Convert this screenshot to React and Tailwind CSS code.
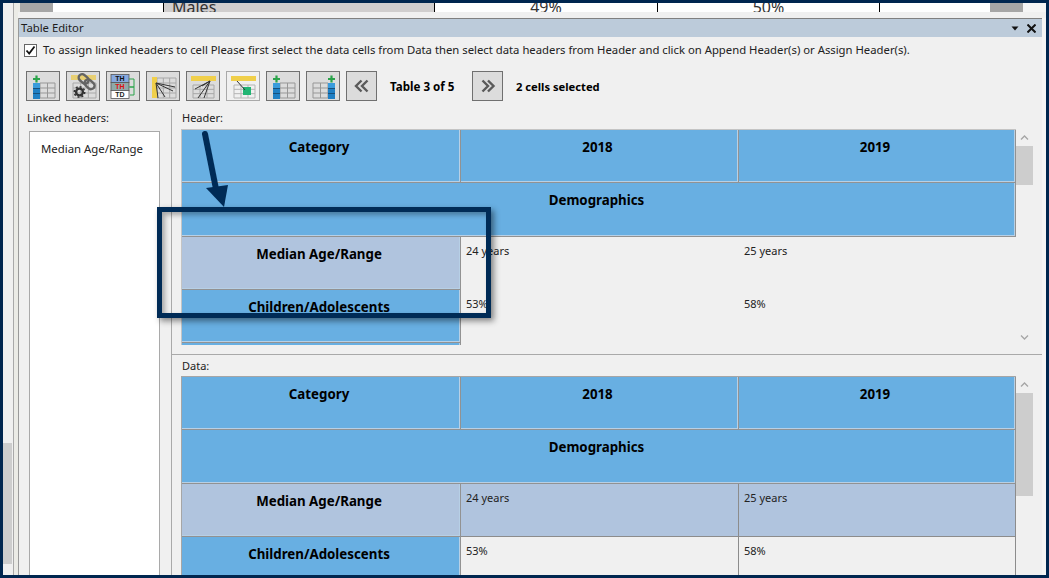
import React from "react";

function Button({ children, light, wide }) {
  return (
    <div
      className={`flex items-center justify-center h-[30px] border ${wide ? "w-[31px]" : "w-[34px]"} ${
        light ? "bg-[#f0f0f0] border-[#a9a9a9]" : "bg-[#dcdcdc] border-[#707070]"
      }`}
    >
      {children}
    </div>
  );
}

function GridLines({ x, y, w, h, cols, rows, color = "#979797" }) {
  const lines = [];
  for (let i = 0; i <= cols; i++) {
    const px = x + (w * i) / cols;
    lines.push(<line key={"c" + i} x1={px} y1={y} x2={px} y2={y + h} stroke={color} strokeWidth="1" />);
  }
  for (let i = 0; i <= rows; i++) {
    const py = y + (h * i) / rows;
    lines.push(<line key={"r" + i} x1={x} y1={py} x2={x + w} y2={py} stroke={color} strokeWidth="1" />);
  }
  return <g>{lines}</g>;
}

function BlueColumn({ x }) {
  return (
    <g>
      <rect x={x} y="11" width="7" height="16" fill="#1f7fc4" />
      <rect x={x} y="11" width="7" height="5" fill="#3a9bdc" />
      <line x1={x} y1="16.5" x2={x + 7} y2="16.5" stroke="#17507c" />
      <line x1={x} y1="21.5" x2={x + 7} y2="21.5" stroke="#17507c" />
      <path d={`M${x + 3.5} 3.5v7M${x} 7h7`} stroke="#2aa34a" strokeWidth="2.2" fill="none" />
    </g>
  );
}

function AddLeftIcon() {
  return (
    <svg width="30" height="28" viewBox="0 0 30 28">
      <GridLines x={12} y={11} w={15} h={15} cols={2} rows={3} />
      <BlueColumn x={5} />
    </svg>
  );
}

function AddRightIcon() {
  return (
    <svg width="30" height="28" viewBox="0 0 30 28">
      <GridLines x={5} y={11} w={15} h={15} cols={2} rows={3} />
      <BlueColumn x={20} />
    </svg>
  );
}

function LinkIcon() {
  return (
    <svg width="30" height="28" viewBox="0 0 30 28">
      <rect x="3" y="3" width="25" height="5" fill="#e8cf72" />
      <GridLines x={5} y={11} w={23} h={15} cols={3} rows={3} color="#a8a8a8" />
      <g fill="none" stroke="#646464" strokeWidth="2.4" transform="rotate(42 19 10)">
        <rect x="9" y="6.5" width="11" height="7" rx="3.5" />
        <rect x="17" y="6.5" width="11" height="7" rx="3.5" />
      </g>
      <circle cx="11.5" cy="20" r="3.4" fill="none" stroke="#333" strokeWidth="2.4" />
      <circle cx="11.5" cy="20" r="5.2" fill="none" stroke="#333" strokeWidth="1.6" strokeDasharray="2 2" />
    </svg>
  );
}

function ThIcon() {
  return (
    <svg width="30" height="28" viewBox="0 0 30 28">
      <rect x="3" y="2.5" width="18" height="8" fill="#86a9e0" stroke="#555" strokeWidth="0.8" />
      <rect x="3" y="10.5" width="18" height="8" fill="#8fa9a9" stroke="#555" strokeWidth="0.8" />
      <rect x="3" y="18.5" width="18" height="8" fill="#fff" stroke="#555" strokeWidth="0.8" />
      <text x="12" y="9.3" textAnchor="middle" fontSize="7" fontWeight="700" fontFamily="Liberation Sans, sans-serif" fill="#111">TH</text>
      <text x="12" y="17.3" textAnchor="middle" fontSize="7" fontWeight="700" fontFamily="Liberation Sans, sans-serif" fill="#e01010">TH</text>
      <text x="12" y="25.3" textAnchor="middle" fontSize="7" fontWeight="700" fontFamily="Liberation Sans, sans-serif" fill="#222">TD</text>
      <path d="M21 7h5v8h-4" fill="none" stroke="#2aa34a" strokeWidth="1" />
      <path d="M21 15h5v8h-4" fill="none" stroke="#2aa34a" strokeWidth="1" />
    </svg>
  );
}

function RowHeaderIcon() {
  return (
    <svg width="30" height="28" viewBox="0 0 30 28">
      <GridLines x={9} y={6} w={19} h={20} cols={3} rows={4} color="#a8a8a8" />
      <rect x="4" y="5" width="5" height="21" fill="#f0cf4a" />
      <path d="M8 11L27 15M8 11L25 19M8 11L17 25M8 11L10 26" stroke="#333" strokeWidth="1" fill="none" />
    </svg>
  );
}

function ColHeaderIcon() {
  return (
    <svg width="30" height="28" viewBox="0 0 30 28">
      <GridLines x={5} y={13} w={21} h={13} cols={3} rows={3} color="#a8a8a8" />
      <rect x="3" y="4" width="25" height="5" fill="#f0cf4a" />
      <path d="M22 9L7 17M22 9L10 26M22 9L16 26M22 9L14 14" stroke="#333" strokeWidth="1" fill="none" />
    </svg>
  );
}

function AssignIcon() {
  return (
    <svg width="30" height="28" viewBox="0 0 30 28">
      <GridLines x={6} y={13} w={21} h={13} cols={3} rows={3} color="#b5b5b5" />
      <rect x="3" y="4" width="25" height="5" fill="#f0cf4a" />
      <rect x="15" y="15" width="8" height="8" fill="#22b573" />
      <path d="M9 9L17 18" stroke="#333" strokeWidth="1" />
    </svg>
  );
}

function Chevrons({ right }) {
  return (
    <svg width="16" height="16" viewBox="0 0 16 16" fill="none" stroke="#5a5a5a" strokeWidth="2.4">
      {right ? (
        <path d="M2.5 2.5L8 8L2.5 13.5M8 2.5L13.5 8L8 13.5" />
      ) : (
        <path d="M7.5 2.5L2 8L7.5 13.5M13.5 2.5L8 8L13.5 13.5" />
      )}
    </svg>
  );
}

function HeadCell({ children, selected, span }) {
  return (
    <div
      className={`h-full flex justify-center pt-[7px] pr-[4px] border-r border-b border-[#929292] shadow-[inset_-1px_-1px_0_#b7d0e6] text-[13.3px] font-bold text-black leading-[20px] ${
        selected ? "bg-[#b0c4de]" : "bg-[#68afe2]"
      } ${span ? "col-span-3" : ""}`}
    >
      {children}
    </div>
  );
}

function DataCell({ children, bordered }) {
  return (
    <div
      className={`h-full pl-[5px] pt-[5px] text-[11px] leading-[18px] text-[#222] ${
        bordered ? "border-r border-b border-[#8c8c8c]" : ""
      } ${bordered === "sel" ? "bg-[#b0c4de]" : ""}`}
    >
      {children}
    </div>
  );
}

function ScrollBar({ thumbTop, thumbHeight, down }) {
  return (
    <div className="relative w-[17px] h-full shrink-0">
      <svg className="absolute left-[4px] top-[5px]" width="9" height="7" viewBox="0 0 9 7" fill="none" stroke="#a6a6a6" strokeWidth="1.3">
        <path d="M1 5.5L4.5 2L8 5.5" />
      </svg>
      <div className="absolute left-0 w-[17px] bg-[#cdcdcd]" style={{ top: thumbTop, height: thumbHeight }} />
      {down && (
        <svg className="absolute left-[4px] top-[205px]" width="9" height="7" viewBox="0 0 9 7" fill="none" stroke="#a6a6a6" strokeWidth="1.3">
          <path d="M1 1.5L4.5 5L8 1.5" />
        </svg>
      )}
    </div>
  );
}

function HeaderPane() {
  return (
    <div className="flex h-[216px] overflow-hidden shrink-0">
      <div className="grid grid-cols-[279px_278px_277px] auto-rows-[53.3px] w-[835px] shrink-0 border-t border-l border-[#c4c4c4]">
        <HeadCell>Category</HeadCell>
        <HeadCell>2018</HeadCell>
        <HeadCell>2019</HeadCell>
        <HeadCell span>Demographics</HeadCell>
        <HeadCell selected>Median Age/Range</HeadCell>
        <DataCell>24 years</DataCell>
        <DataCell>25 years</DataCell>
        <HeadCell>Children/Adolescents</HeadCell>
        <DataCell>53%</DataCell>
        <DataCell>58%</DataCell>
        <HeadCell> </HeadCell>
      </div>
      <ScrollBar thumbTop={17} thumbHeight={39} down />
    </div>
  );
}

function DataPane() {
  return (
    <div className="flex flex-1 overflow-hidden">
      <div className="grid grid-cols-[279px_278px_277px] auto-rows-[53.3px] w-[835px] shrink-0 border-t border-l border-[#a6a6a6]">
        <HeadCell>Category</HeadCell>
        <HeadCell>2018</HeadCell>
        <HeadCell>2019</HeadCell>
        <HeadCell span>Demographics</HeadCell>
        <HeadCell selected>Median Age/Range</HeadCell>
        <DataCell bordered="sel">24 years</DataCell>
        <DataCell bordered="sel">25 years</DataCell>
        <HeadCell>Children/Adolescents</HeadCell>
        <DataCell bordered>53%</DataCell>
        <DataCell bordered>58%</DataCell>
      </div>
      <ScrollBar thumbTop={17} thumbHeight={103} />
    </div>
  );
}

export default function App() {
  return (
    <div
      className="relative w-[1049px] h-[578px] border-[3px] border-[#00264f] bg-[#f0f0f0] overflow-hidden flex text-black"
      style={{ fontFamily: '"Noto Sans", "Open Sans", sans-serif' }}
    >
      {/* page scrollbar behind the editor */}
      <div className="relative w-[11px] shrink-0 border-r border-[#a9a9a9]">
        <div className="absolute left-0 top-[440px] w-[9px] h-[121px] bg-[#cdcdcd]" />
      </div>
      <div className="w-[4px] shrink-0 bg-[#ebebe6]" />

      <div className="flex-1 flex flex-col min-w-0 bg-[#f5f5f5]">
        {/* table behind the editor, only its last row shows */}
        <div className="h-[9px] flex overflow-hidden shrink-0 text-[#333]">
          <div className="w-[2px] bg-[#ebebe6]" />
          <div className="w-[33px] bg-[#a6a6a6]" />
          <div className="w-[111px] bg-white border-r border-black" />
          <div className="w-[271px] bg-[#d0cece] border-r border-black pl-[8px] text-[16px] leading-[9px]">
            <div>Males</div>
          </div>
          <div className="w-[223px] bg-white border-r border-black text-center text-[16px]">
            <div className="-mt-[8px]">49%</div>
          </div>
          <div className="w-[222px] bg-white border-r border-black text-center text-[16px]">
            <div className="-mt-[8px]">50%</div>
          </div>
          <div className="w-[110px] bg-white" />
          <div className="w-[33px] bg-[#a6a6a6]" />
          <div className="flex-1" />
        </div>
        <div className="h-[6px] bg-[#f0f0f0] shrink-0" />

        <div className="flex-1 flex flex-col mr-[4px] min-h-0 bg-[#f0f0f0] border-l border-[#9a9a9a]">
          {/* title bar */}
          <div className="h-[19px] shrink-0 flex items-center justify-between pl-[2px] pr-[6px] pt-[1px] bg-[#bccbda] border-t border-[#808080] text-[11.3px] text-[#1c1c1c]">
            <span>Table Editor</span>
            <div className="flex items-center gap-[8px]">
              <svg width="8" height="5" viewBox="0 0 8 5"><path d="M0.5 0.5h7L4 4.5z" fill="#111" /></svg>
              <svg width="9" height="9" viewBox="0 0 9 9" stroke="#111" strokeWidth="2"><path d="M0.5 0.5L8.5 8.5M8.5 0.5L0.5 8.5" /></svg>
            </div>
          </div>

          {/* notice */}
          <div className="flex items-center gap-[6px] h-[14px] mt-[6px] ml-[5px] shrink-0 text-[11.3px] text-[#222] whitespace-nowrap">
            <div className="w-[13px] h-[13px] bg-white border border-[#666] flex items-center justify-center">
              <svg width="11" height="11" viewBox="0 0 11 11" fill="none" stroke="#111" strokeWidth="1.8"><path d="M1.5 5.5L4.2 8.5L9.5 1.5" /></svg>
            </div>
            <span className="pt-[1px]">To assign linked headers to cell Please first select the data cells from Data then select data headers from Header and click on Append Header(s) or Assign Header(s).</span>
          </div>

          {/* toolbar */}
          <div className="flex items-center gap-[6px] mt-[14px] ml-[7px] shrink-0 text-[11.2px] font-bold whitespace-nowrap">
            <Button><AddLeftIcon /></Button>
            <Button><LinkIcon /></Button>
            <Button><ThIcon /></Button>
            <Button><RowHeaderIcon /></Button>
            <Button><ColHeaderIcon /></Button>
            <Button light><AssignIcon /></Button>
            <Button><AddLeftIcon /></Button>
            <Button><AddRightIcon /></Button>
            <Button wide><Chevrons /></Button>
            <span className="ml-[7px] w-[76px] pt-[2px] text-[11.6px]">Table 3 of 5</span>
            <Button wide><Chevrons right /></Button>
            <span className="ml-[7px] pt-[2px]">2 cells selected</span>
          </div>

          <div className="flex flex-1 min-h-0 mt-[8px]">
            {/* linked headers */}
            <div className="w-[153px] shrink-0 flex flex-col pl-[10px] border-r border-[#a9a9a9]">
              <div className="h-[22px] pt-[1px] text-[11px] leading-[16px] text-[#222] -ml-[2px]">Linked headers:</div>
              <div className="flex-1 w-[131px] bg-white border border-b-0 border-[#a9a9a9] pl-[11px] pt-[8px] text-[11.4px] text-[#222]">
                Median Age/Range
              </div>
            </div>

            <div className="flex-1 flex flex-col min-w-0 pl-[9px]">
              <div className="h-[20px] pt-[1px] pl-[1px] text-[11px] leading-[16px] text-[#222] shrink-0">Header:</div>
              <HeaderPane />
              <div className="h-[10px] border-b border-[#a9a9a9] -ml-[9px] shrink-0" />
              <div className="h-[21px] pt-[3px] pl-[1px] text-[11px] leading-[16px] text-[#222] shrink-0">Data:</div>
              <DataPane />
            </div>
          </div>
        </div>
      </div>

      {/* callout drawn over the screenshot */}
      <svg className="absolute left-[180px] top-[120px]" width="60" height="90" viewBox="0 0 60 90">
        <path d="M22 11L33 66" stroke="#002b56" strokeWidth="6" strokeLinecap="round" fill="none" />
        <path d="M23 65L45 62L41 84z" fill="#002b56" />
      </svg>
      <div className="absolute left-[154px] top-[204px] w-[334px] h-[111px] border-[5px] border-[#002b56] shadow-[3px_3px_6px_rgba(0,0,0,0.45),inset_3px_3px_5px_rgba(0,0,0,0.3)]" />
    </div>
  );
}
